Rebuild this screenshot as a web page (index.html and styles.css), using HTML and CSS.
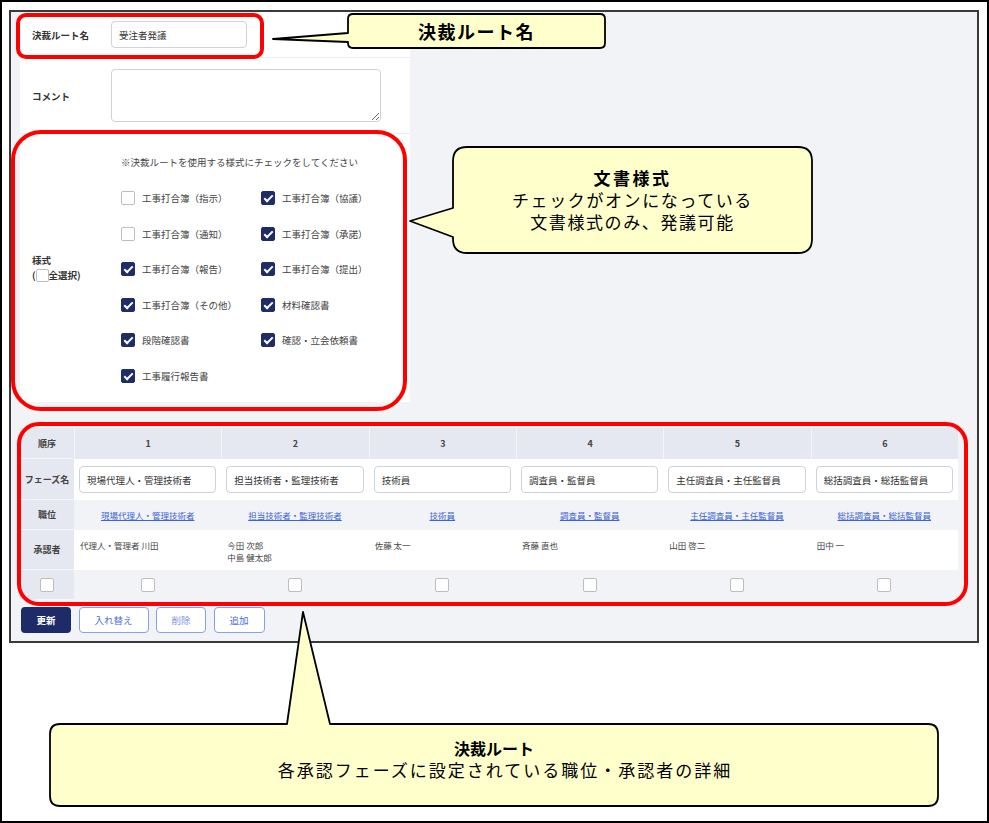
FILE: index.html
```html
<!DOCTYPE html>
<html lang="ja">
<head>
  <meta charset="UTF-8" />
  <title>決裁ルート</title>
  <link rel="stylesheet" href="styles.css">
</head>
<body>
<div class="page">

  <!-- captured screen -->
  <div class="screen">
    <div class="form-panel">
      <div class="form-row row-name">
        <div class="form-label">決裁ルート名</div>
        <input class="text-input name-input" type="text" value="受注者発議">
      </div>
      <div class="form-row row-comment">
        <div class="form-label">コメント</div>
        <textarea class="comment-input"></textarea>
      </div>
      <div class="form-row row-forms">
        <div class="form-label forms-label">様式<br>(<span class="cb"></span>全選択)</div>
        <div class="forms-field">
          <div class="forms-note">※決裁ルートを使用する様式にチェックをしてください</div>
          <div class="forms-grid">
            <div class="check-item"><span class="cb"></span>工事打合簿（指示）</div>
            <div class="check-item"><span class="cb on"></span>工事打合簿（協議）</div>
            <div class="check-item"><span class="cb"></span>工事打合簿（通知）</div>
            <div class="check-item"><span class="cb on"></span>工事打合簿（承諾）</div>
            <div class="check-item"><span class="cb on"></span>工事打合簿（報告）</div>
            <div class="check-item"><span class="cb on"></span>工事打合簿（提出）</div>
            <div class="check-item"><span class="cb on"></span>工事打合簿（その他）</div>
            <div class="check-item"><span class="cb on"></span>材料確認書</div>
            <div class="check-item"><span class="cb on"></span>段階確認書</div>
            <div class="check-item"><span class="cb on"></span>確認・立会依頼書</div>
            <div class="check-item"><span class="cb on"></span>工事履行報告書</div>
          </div>
        </div>
      </div>
    </div>

    <div class="route-table">
      <div class="cell side">順序</div>
      <div class="cell head">1</div>
      <div class="cell head">2</div>
      <div class="cell head">3</div>
      <div class="cell head">4</div>
      <div class="cell head">5</div>
      <div class="cell head">6</div>

      <div class="cell side">フェーズ名</div>
      <div class="cell phase"><input class="text-input phase-input" type="text" value="現場代理人・管理技術者"></div>
      <div class="cell phase"><input class="text-input phase-input" type="text" value="担当技術者・監理技術者"></div>
      <div class="cell phase"><input class="text-input phase-input" type="text" value="技術員"></div>
      <div class="cell phase"><input class="text-input phase-input" type="text" value="調査員・監督員"></div>
      <div class="cell phase"><input class="text-input phase-input" type="text" value="主任調査員・主任監督員"></div>
      <div class="cell phase"><input class="text-input phase-input" type="text" value="総括調査員・総括監督員"></div>

      <div class="cell side">職位</div>
      <div class="cell post"><a href="#">現場代理人・管理技術者</a></div>
      <div class="cell post"><a href="#">担当技術者・監理技術者</a></div>
      <div class="cell post"><a href="#">技術員</a></div>
      <div class="cell post"><a href="#">調査員・監督員</a></div>
      <div class="cell post"><a href="#">主任調査員・主任監督員</a></div>
      <div class="cell post"><a href="#">総括調査員・総括監督員</a></div>

      <div class="cell side">承認者</div>
      <div class="cell approver">代理人・管理者 川田</div>
      <div class="cell approver">今田 次郎<br>中島 健太郎</div>
      <div class="cell approver">佐藤 太一</div>
      <div class="cell approver">斉藤 直也</div>
      <div class="cell approver">山田 啓二</div>
      <div class="cell approver">田中 一</div>

      <div class="cell side"><span class="cb"></span></div>
      <div class="cell pick"><span class="cb"></span></div>
      <div class="cell pick"><span class="cb"></span></div>
      <div class="cell pick"><span class="cb"></span></div>
      <div class="cell pick"><span class="cb"></span></div>
      <div class="cell pick"><span class="cb"></span></div>
      <div class="cell pick"><span class="cb"></span></div>
    </div>

    <div class="actions">
      <button class="btn btn-primary">更新</button>
      <button class="btn btn-outline btn-swap">入れ替え</button>
      <button class="btn btn-outline btn-delete">削除</button>
      <button class="btn btn-outline btn-add">追加</button>
    </div>
  </div>

  <!-- annotation layer -->
  <div class="annot">
    <svg class="annot-shapes" width="989" height="823" viewBox="0 0 989 823">
      <rect x="18" y="15" width="244" height="42" rx="8" fill="none" stroke="#ff0000" stroke-width="4"/>
      <rect x="13" y="132" width="392" height="277" rx="28" fill="none" stroke="#ff0000" stroke-width="4"/>
      <rect x="19" y="424" width="947" height="180" rx="20" fill="none" stroke="#ff0000" stroke-width="4"/>

      <path d="M353,14 H600 Q605,14 605,19 V43 Q605,48 600,48 H353 Q348,48 348,43 V42 L273,39 L348,33 V19 Q348,14 353,14 Z"
            fill="#ffffcc" stroke="#000" stroke-width="1.8" stroke-linejoin="round"/>
      <path d="M467,147 H798 Q812,147 812,161 V239 Q812,253 798,253 H467 Q453,253 453,239 V237 L410,221 L453,208 V161 Q453,147 467,147 Z"
            fill="#ffffcc" stroke="#000" stroke-width="1.8" stroke-linejoin="round"/>
      <path d="M60,724 H287 L303,612 L330,724 H928 Q938,724 938,734 V796 Q938,806 928,806 H60 Q50,806 50,796 V734 Q50,724 60,724 Z"
            fill="#ffffcc" stroke="#000" stroke-width="1.8" stroke-linejoin="round"/>
    </svg>

    <div class="callout-text t-name"><b>決裁ルート名</b></div>
    <div class="callout-text t-forms">
      <b>文書様式</b>
      <span>チェックがオンになっている</span>
      <span>文書様式のみ、発議可能</span>
    </div>
    <div class="callout-text t-route">
      <b>決裁ルート</b>
      <span class="route-desc">各承認フェーズに設定されている職位・承認者の詳細</span>
    </div>
  </div>

</div>
</body>
</html>
```

FILE: styles.css
```css
html, body {
  margin: 0;
  padding: 0;
}
body {
  font-family: "Noto Sans CJK JP", "Noto Sans", sans-serif;
  color: #333;
  background: #fff;
}
.page {
  position: relative;
  width: 989px;
  height: 823px;
  box-sizing: border-box;
  border: 2px solid #000;
  padding: 8px 0 0 7px;
  overflow: hidden;
}

/* screen */
.screen {
  width: 970px;
  height: 633px;
  box-sizing: border-box;
  border: 2px solid #3a3a3a;
  background: #f2f3f7;
  padding-left: 9px;
}
.form-panel {
  width: 390px;
  background: #fff;
}
.form-row {
  display: flex;
  align-items: center;
  box-sizing: border-box;
  border-bottom: 1px solid #eceef3;
}
.row-name {
  height: 46px;
}
.row-comment {
  height: 76px;
}
.row-forms {
  height: 268px;
  border-bottom: none;
}
.form-label {
  width: 91px;
  flex-shrink: 0;
  box-sizing: border-box;
  padding-left: 12px;
  font-size: 9.5px;
  font-weight: bold;
  color: #333;
}
.forms-label {
  line-height: 15px;
}
.forms-label .cb {
  width: 13px;
  height: 13px;
  vertical-align: -3px;
}
.text-input {
  font-family: inherit;
  font-size: 9.5px;
  color: #333;
  background: #fff;
  border: 1px solid #cfd2d8;
  border-radius: 4px;
  box-sizing: border-box;
  padding: 0 7px;
  outline: none;
}
.name-input {
  width: 136px;
  height: 27px;
}
.comment-input {
  width: 270px;
  height: 53px;
  box-sizing: border-box;
  border: 1px solid #cfd2d8;
  border-radius: 4px;
  font-family: inherit;
}
.forms-field {
  align-self: flex-start;
  padding: 11px 0 0 10px;
}
.forms-note {
  height: 35.5px;
  line-height: 35.5px;
  font-size: 9.5px;
  color: #444;
}
.forms-grid {
  display: grid;
  grid-template-columns: 140px 140px;
  grid-auto-rows: 35.5px;
}
.check-item {
  display: flex;
  align-items: center;
  gap: 7px;
  font-size: 9.5px;
  color: #444;
}

/* checkbox */
.cb {
  display: inline-block;
  position: relative;
  width: 14px;
  height: 14px;
  box-sizing: border-box;
  border: 1px solid #bdbdbd;
  border-radius: 2px;
  background: #fff;
  flex-shrink: 0;
}
.cb.on {
  background: #1f2d66;
  border-color: #1f2d66;
}
.cb.on::after {
  content: "";
  position: absolute;
  left: 4px;
  top: 1px;
  width: 3px;
  height: 7px;
  border: solid #fff;
  border-width: 0 2px 2px 0;
  transform: rotate(45deg);
}

/* route table */
.route-table {
  display: grid;
  grid-template-columns: 54px repeat(6, 1fr);
  grid-template-rows: 31px 41px 30px 40px 30px;
  width: 938px;
  margin-top: 26px;
  background: #fff;
}
.cell {
  display: flex;
  align-items: center;
  justify-content: center;
  box-sizing: border-box;
  font-size: 9px;
}
.side {
  background: #e5e8f0;
  font-weight: bold;
  color: #444;
  border-bottom: 1px solid #f4f5f9;
}
.head {
  background: #e5e8f0;
  font-weight: bold;
  color: #444;
  border-left: 1px solid #f4f5f9;
}
.phase {
  padding: 0 5px;
}
.phase-input {
  width: 100%;
  height: 27px;
}
.post {
  background: #f2f3f7;
}
.post a {
  font-size: 8.5px;
  color: #3b62d8;
  text-decoration: underline;
}
.approver {
  align-items: flex-start;
  justify-content: flex-start;
  padding: 9px 6px 0;
  font-size: 8.5px;
  line-height: 12px;
  color: #444;
}
.pick {
  background: #f2f3f7;
}

/* buttons */
.actions {
  display: flex;
  gap: 7.5px;
  margin-top: 7px;
  padding-left: 1px;
}
.btn {
  height: 26px;
  box-sizing: border-box;
  border-radius: 4px;
  font-family: inherit;
  font-size: 9.5px;
  padding: 0;
  cursor: pointer;
}
.btn-primary {
  width: 50px;
  background: #1d2c69;
  color: #fff;
  font-weight: bold;
  border: none;
}
.btn-outline {
  background: #fff;
  border: 1px solid #86a0ef;
  color: #4a6cd9;
}
.btn-swap {
  width: 70px;
}
.btn-delete {
  width: 50px;
  color: #8294e0;
}
.btn-add {
  width: 51px;
}

/* annotations */
.annot {
  position: absolute;
  left: -2px;
  top: -2px;
  width: 989px;
  height: 823px;
  pointer-events: none;
}
.annot-shapes {
  position: absolute;
  left: 0;
  top: 0;
}
.callout-text {
  position: absolute;
  display: flex;
  flex-direction: column;
  align-items: center;
  color: #000;
  font-size: 17px;
  line-height: 22px;
}
.callout-text b {
  font-weight: bold;
}
.t-name {
  left: 348px;
  top: 14px;
  width: 257px;
  height: 34px;
  justify-content: center;
  font-size: 18px;
  letter-spacing: 1.5px;
}
.t-forms {
  left: 453px;
  top: 167px;
  width: 359px;
  letter-spacing: 1.6px;
}
.t-forms b {
  letter-spacing: 2.5px;
}
.t-route {
  left: 50px;
  top: 737px;
  width: 888px;
  letter-spacing: 2px;
}
.t-route b {
  font-size: 16px;
  letter-spacing: 0;
}
.route-desc {
  padding-left: 22px;
}
```
